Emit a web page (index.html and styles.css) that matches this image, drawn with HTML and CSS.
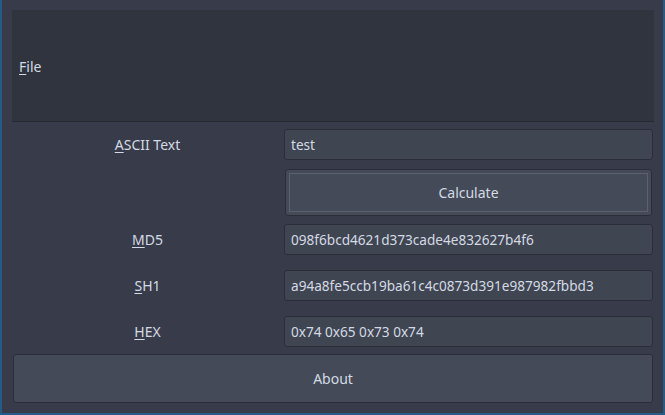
FILE: index.html
```html
<!DOCTYPE html>
<html>
<head>
<meta charset="utf-8">
<link rel="stylesheet" href="styles.css">
</head>
<body>
<div class="window">
  <div class="menubar"><span class="menu-item"><u>F</u>ile</span></div>
  <div class="form">
    <div class="label row-ascii"><span><u>A</u>SCII Text</span></div>
    <div class="field row-ascii">test</div>
    <div class="calc-wrap"><button class="btn calc"><span class="focus">Calculate</span></button></div>
    <div class="label row-md5"><span><u>M</u>D5</span></div>
    <div class="field row-md5">098f6bcd4621d373cade4e832627b4f6</div>
    <div class="label row-sh1"><span><u>S</u>H1</span></div>
    <div class="field row-sh1">a94a8fe5ccb19ba61c4c0873d391e987982fbbd3</div>
    <div class="label row-hex"><span><u>H</u>EX</span></div>
    <div class="field row-hex">0x74 0x65 0x73 0x74</div>
    <button class="btn about">About</button>
  </div>
</div>
</body>
</html>
```
FILE: styles.css
```css
html, body {
  margin: 0;
  padding: 0;
}
body {
  background: #245c88;
  width: 665px;
  height: 415px;
  overflow: hidden;
  font-family: "Noto Sans", "DejaVu Sans", sans-serif;
  font-size: 14px;
  color: #d3dae3;
}
.window {
  margin: 0 2px 0 2px;
  height: 413px;
  background: #383c4a;
  padding: 10px 9px 0 10px;
  box-sizing: border-box;
}
.menubar {
  height: 112px;
  box-sizing: border-box;
  background: #2f343f;
  border-bottom: 1px solid #262a33;
  display: flex;
  align-items: center;
  padding-left: 7px;
  padding-top: 1px;
}
.menu-item {
  color: #d3dae3;
}
u {
  text-decoration: underline;
  text-underline-offset: 2px;
}
.form {
  display: grid;
  grid-template-columns: 271px 369px;
  margin: 7px 0 0 1px;
}
.label {
  display: flex;
  align-items: center;
  justify-content: center;
  height: 31px;
  padding-right: 2px;
}
.field {
  height: 31px;
  box-sizing: border-box;
  background: #404552;
  border: 1px solid #2b2e39;
  border-radius: 3px;
  padding: 0 6px;
  display: flex;
  align-items: center;
  white-space: nowrap;
  font-size: 13.6px;
}
.row-ascii { grid-column: 1; grid-row: 1; }
.row-md5 { grid-column: 1; grid-row: 3; margin-top: 8px; }
.row-sh1 { grid-column: 1; grid-row: 4; margin-top: 15px; }
.row-hex { grid-column: 1; grid-row: 5; margin-top: 15px; }
.field.row-ascii, .field.row-md5, .field.row-sh1, .field.row-hex { grid-column: 2; }
.calc-wrap {
  grid-column: 2;
  grid-row: 2;
  padding: 9px 1px 0 1px;
}
.btn {
  font-family: inherit;
  font-size: 14px;
  color: #d3dae3;
  background: #444a58;
  border: 1px solid #2b2e39;
  border-radius: 3px;
  margin: 0;
  cursor: pointer;
}
.calc {
  width: 100%;
  height: 47px;
  padding: 3px;
  display: block;
}
.calc .focus {
  display: flex;
  align-items: center;
  justify-content: center;
  height: 100%;
  box-sizing: border-box;
  border: 1px solid #5b616e;
}
.about {
  grid-column: 1 / 3;
  grid-row: 6;
  height: 49px;
  margin-top: 7px;
  padding-left: 0;
  padding-right: 0;
}
```
